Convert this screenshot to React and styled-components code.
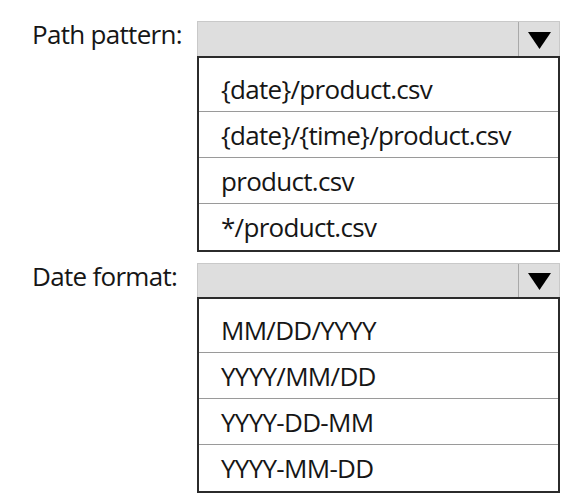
import React from "react";
import styled, { createGlobalStyle } from "styled-components";

const Global = createGlobalStyle`
  html, body { margin: 0; padding: 0; background: #ffffff; }
  body { font-family: "Open Sans", "Noto Sans", sans-serif; color: #1a1a1a; }
`;

const Page = styled.div`
  width: 566px;
  height: 497px;
  padding-top: 21px;
  box-sizing: border-box;
  display: flex;
  flex-direction: column;
  gap: 11px;
`;

const Section = styled.div`
  display: grid;
  grid-template-columns: 197px 363px;
`;

const Label = styled.div`
  padding-left: 32px;
  font-size: 26px;
  letter-spacing: -0.7px;
  line-height: 26px;
  color: #161616;
  white-space: nowrap;
`;

const Combo = styled.div`
  display: flex;
  flex-direction: column;
`;

const Bar = styled.div`
  height: ${(p) => p.$h}px;
  box-sizing: border-box;
  background: #dedede;
  border: 1px solid #c9c9c9;
  border-bottom: none;
  display: grid;
  grid-template-columns: 1fr 41px;
`;

const Button = styled.div`
  border-left: 1px solid #a9a9a9;
  display: flex;
  justify-content: center;
  align-items: flex-start;
  padding-top: ${(p) => p.$top}px;
`;

const List = styled.div`
  border: 2px solid #2b2b2b;
  padding-top: 8px;
  display: flex;
  flex-direction: column;
`;

const Option = styled.div`
  height: 46px;
  box-sizing: border-box;
  padding-left: 22px;
  display: flex;
  align-items: center;
  font-size: 26px;
  letter-spacing: -0.7px;
  color: #161616;
  white-space: nowrap;
  border-bottom: 1px solid ${(p) => (p.$last ? "transparent" : "#9a9a9a")};
`;

const Arrow = () => (
  <svg width="23" height="17" viewBox="0 0 23 17">
    <polygon points="0,0 23,0 11.5,17" fill="#000" />
  </svg>
);

const groups = [
  {
    label: "Path pattern:",
    bar: 35,
    top: 10,
    options: [
      "{date}/product.csv",
      "{date}/{time}/product.csv",
      "product.csv",
      "*/product.csv",
    ],
  },
  {
    label: "Date format:",
    bar: 34,
    top: 9,
    options: ["MM/DD/YYYY", "YYYY/MM/DD", "YYYY-DD-MM", "YYYY-MM-DD"],
  },
];

export default function App() {
  return (
    <>
      <Global />
      <Page>
        {groups.map((g) => (
          <Section key={g.label}>
            <Label>{g.label}</Label>
            <Combo>
              <Bar $h={g.bar}>
                <div />
                <Button $top={g.top}>
                  <Arrow />
                </Button>
              </Bar>
              <List>
                {g.options.map((o, i) => (
                  <Option key={o} $last={i === g.options.length - 1}>
                    {o}
                  </Option>
                ))}
              </List>
            </Combo>
          </Section>
        ))}
      </Page>
    </>
  );
}
